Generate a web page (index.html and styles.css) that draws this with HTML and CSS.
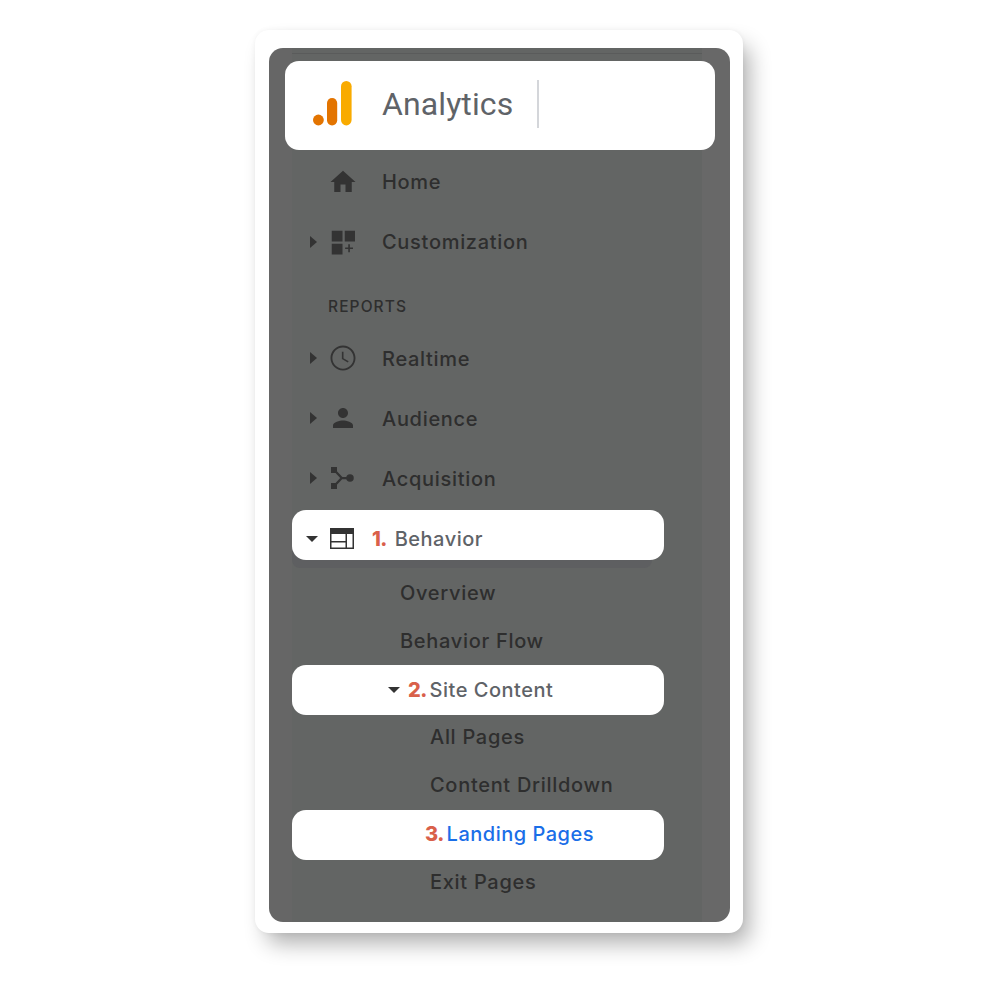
FILE: index.html
```html
<!DOCTYPE html>
<html lang="en">
<head>
  <meta charset="UTF-8" />
  <title>Analytics menu</title>
  <link rel="stylesheet" href="styles.css">
</head>
<body>
  <div class="card">
    <div class="panel">
      <div class="brand">
        <svg class="logo" width="39" height="45" viewBox="0 0 39 45">
          <circle cx="5.4" cy="39" r="5.4" fill="#e37400"/>
          <rect x="14" y="17" width="10.2" height="27.4" rx="5.1" fill="#e37400"/>
          <rect x="28" y="0" width="10.6" height="44.4" rx="5.3" fill="#f9ab00"/>
        </svg>
        <span class="brand-name">Analytics</span>
        <span class="brand-rule"></span>
      </div>

      <nav class="nav">
        <div class="row">
          <span class="arrow arrow-none"></span>
          <svg class="icon" viewBox="0 0 24 24"><path d="M10 20v-6h4v6h5v-8h3L12 3 2 12h3v8z"/></svg>
          <span class="label">Home</span>
        </div>
        <div class="row">
          <span class="arrow"></span>
          <svg class="icon" viewBox="0 0 24 24"><path d="M3 3h8.600v8.600H3zM13.400 3h8.200v8.600h-8.200zM3 13.400h8.600V22H3zM16.200 13.800h1.300v2.500H20v1.300h-2.500v2.500h-1.300v-2.500h-2.500v-1.300h2.500z"/></svg>
          <span class="label">Customization</span>
        </div>

        <div class="section">REPORTS</div>

        <div class="row">
          <span class="arrow"></span>
          <svg class="icon" viewBox="0 0 24 24"><path d="M11.990 2C6.470 2 2 6.480 2 12s4.470 10 9.990 10C17.520 22 22 17.520 22 12S17.520 2 11.990 2zM12 20.500c-4.700 0-8.500-3.800-8.500-8.500S7.300 3.500 12 3.500s8.500 3.800 8.500 8.500-3.800 8.500-8.500 8.500zM12.400 7h-1.300v5.800l4.700 2.800.7-1.100-4.100-2.400z"/></svg>
          <span class="label label-low">Realtime</span>
        </div>
        <div class="row">
          <span class="arrow"></span>
          <svg class="icon" viewBox="0 0 24 24"><path d="M12 12c2.210 0 4-1.790 4-4s-1.790-4-4-4-4 1.790-4 4 1.790 4 4 4zm0 2c-2.670 0-8 1.340-8 4v2h16v-2c0-2.660-5.330-4-8-4z"/></svg>
          <span class="label label-low">Audience</span>
        </div>
        <div class="row">
          <span class="arrow"></span>
          <svg class="icon" viewBox="0 0 24 24">
            <rect x="2.400" y="3.200" width="4.800" height="4.800"/>
            <rect x="2.400" y="16" width="4.800" height="4.800"/>
            <circle cx="17.600" cy="12" r="3"/>
            <path d="M5 5.600 11 12 5 18.400M11 12h6" fill="none" stroke="#333" stroke-width="1.800"/>
          </svg>
          <span class="label label-low">Acquisition</span>
        </div>

        <div class="hl hl-behavior">
          <span class="caret"></span>
          <svg class="icon icon-behavior" viewBox="0 0 30 30"><path fill-rule="evenodd" d="M3 4h24v21H3zM4.500 10v7H18.500v-7zM4.500 18.500v5H18.500v-5zM20 10v13.500h5.500V10z"/></svg>
          <span class="step step-1">1.</span>
          <span class="hl-text">Behavior</span>
        </div>

        <div class="sub">Overview</div>
        <div class="sub">Behavior Flow</div>

        <div class="hl hl-site">
          <span class="caret"></span>
          <span class="step step-2">2.</span>
          <span class="hl-text">Site Content</span>
        </div>

        <div class="sub sub-deep sub-after">All Pages</div>
        <div class="sub sub-deep">Content Drilldown</div>

        <div class="hl hl-landing">
          <span class="step step-3">3.</span>
          <span class="hl-text hl-link">Landing Pages</span>
        </div>

        <div class="sub sub-deep sub-after">Exit Pages</div>
      </nav>
    </div>
  </div>
</body>
</html>
```
FILE: styles.css
```css
html, body {
  height: 1000px;
}

body {
  box-sizing: border-box;
  margin: 0;
  padding: 30px 0 0 255px;
  overflow: hidden;
  background: #fff;
  font-family: Inter, Roboto, "Liberation Sans", sans-serif;
}

.card {
  box-sizing: border-box;
  width: 488px;
  height: 903px;
  padding: 18px 13px 11px 14px;
  background: #fff;
  border-radius: 14px;
  box-shadow: 9px 13px 22px -3px rgba(0,0,0,0.32), 0 0 5px rgba(0,0,0,0.05);
}

.panel {
  height: 874px;
  padding-top: 13px;
  box-sizing: border-box;
  border-radius: 14px;
  background:
    linear-gradient(#5a5b5b, #5a5b5b) 23px 5px / 410px 1px no-repeat,
    linear-gradient(to right, #666 23px, #636564 23px, #636564 433px, #686868 433px);
}

.brand {
  box-sizing: border-box;
  display: flex;
  align-items: flex-start;
  width: 430px;
  height: 89px;
  margin-left: 16px;
  padding: 19px 0 0 28px;
  background: #fff;
  border-radius: 14px;
}

.logo {
  margin-top: 1px;
}

.brand-name {
  margin-left: 30px;
  font-family: Roboto, sans-serif;
  font-size: 32px;
  line-height: 48px;
  letter-spacing: 0.1px;
  color: #5f6368;
}

.brand-rule {
  width: 2px;
  height: 48px;
  margin-left: 24px;
  background: #d4d6da;
}

.nav {
  padding-top: 2px;
}

.row {
  display: flex;
  align-items: center;
  height: 60px;
  padding-left: 41px;
}

.arrow {
  width: 0;
  height: 0;
  margin-right: 11px;
  border-left: 7px solid #333;
  border-top: 6.5px solid transparent;
  border-bottom: 6.5px solid transparent;
}

.arrow-none {
  visibility: hidden;
}

.icon {
  width: 30px;
  height: 30px;
  flex: none;
  fill: #333;
}

.label {
  margin-left: 24px;
  font-size: 20px;
  font-weight: 500;
  letter-spacing: 0.7px;
  color: #2e2e2e;
}

.label-low {
  padding-top: 2px;
}

.section {
  margin: 12px 0 0 59px;
  height: 44px;
  line-height: 45px;
  font-size: 15.5px;
  font-weight: 500;
  letter-spacing: 1.1px;
  color: #2e2e2e;
}

.hl {
  display: flex;
  align-items: center;
  box-sizing: border-box;
  width: 372px;
  height: 50px;
  margin-left: 23px;
  background: #fff;
  border-radius: 14px;
  font-size: 20px;
}

.hl-behavior {
  margin-top: 2px;
  margin-bottom: 9px;
  padding: 8px 0 0 14px;
  box-shadow: -6px 14px 0 -6px #5e5f61;
}

.hl-site {
  padding: 0 0 1px 96px;
}

.hl-landing {
  margin-top: 1px;
  padding: 0 0 3px 133px;
}

.caret {
  width: 0;
  height: 0;
  border-top: 6px solid #333;
  border-left: 6.5px solid transparent;
  border-right: 6.5px solid transparent;
}

.icon-behavior {
  margin-left: 9px;
}

.step {
  font-weight: 800;
  letter-spacing: -0.6px;
  color: #d9604a;
}

.step-1 {
  margin-left: 15px;
  margin-right: 8px;
}

.step-2 {
  margin-left: 8px;
  margin-right: 3px;
}

.step-3 {
  margin-right: 3px;
}

.hl-text {
  color: #5f6368;
  font-weight: 500;
  letter-spacing: 0.5px;
}

.hl-link {
  color: #1a6ee8;
}

.sub {
  height: 48px;
  line-height: 48px;
  padding-left: 131px;
  font-size: 20px;
  font-weight: 500;
  letter-spacing: 0.7px;
  color: #2e2e2e;
}

.sub-deep {
  padding-left: 161px;
}

.sub-after {
  margin-top: -2px;
}
```
